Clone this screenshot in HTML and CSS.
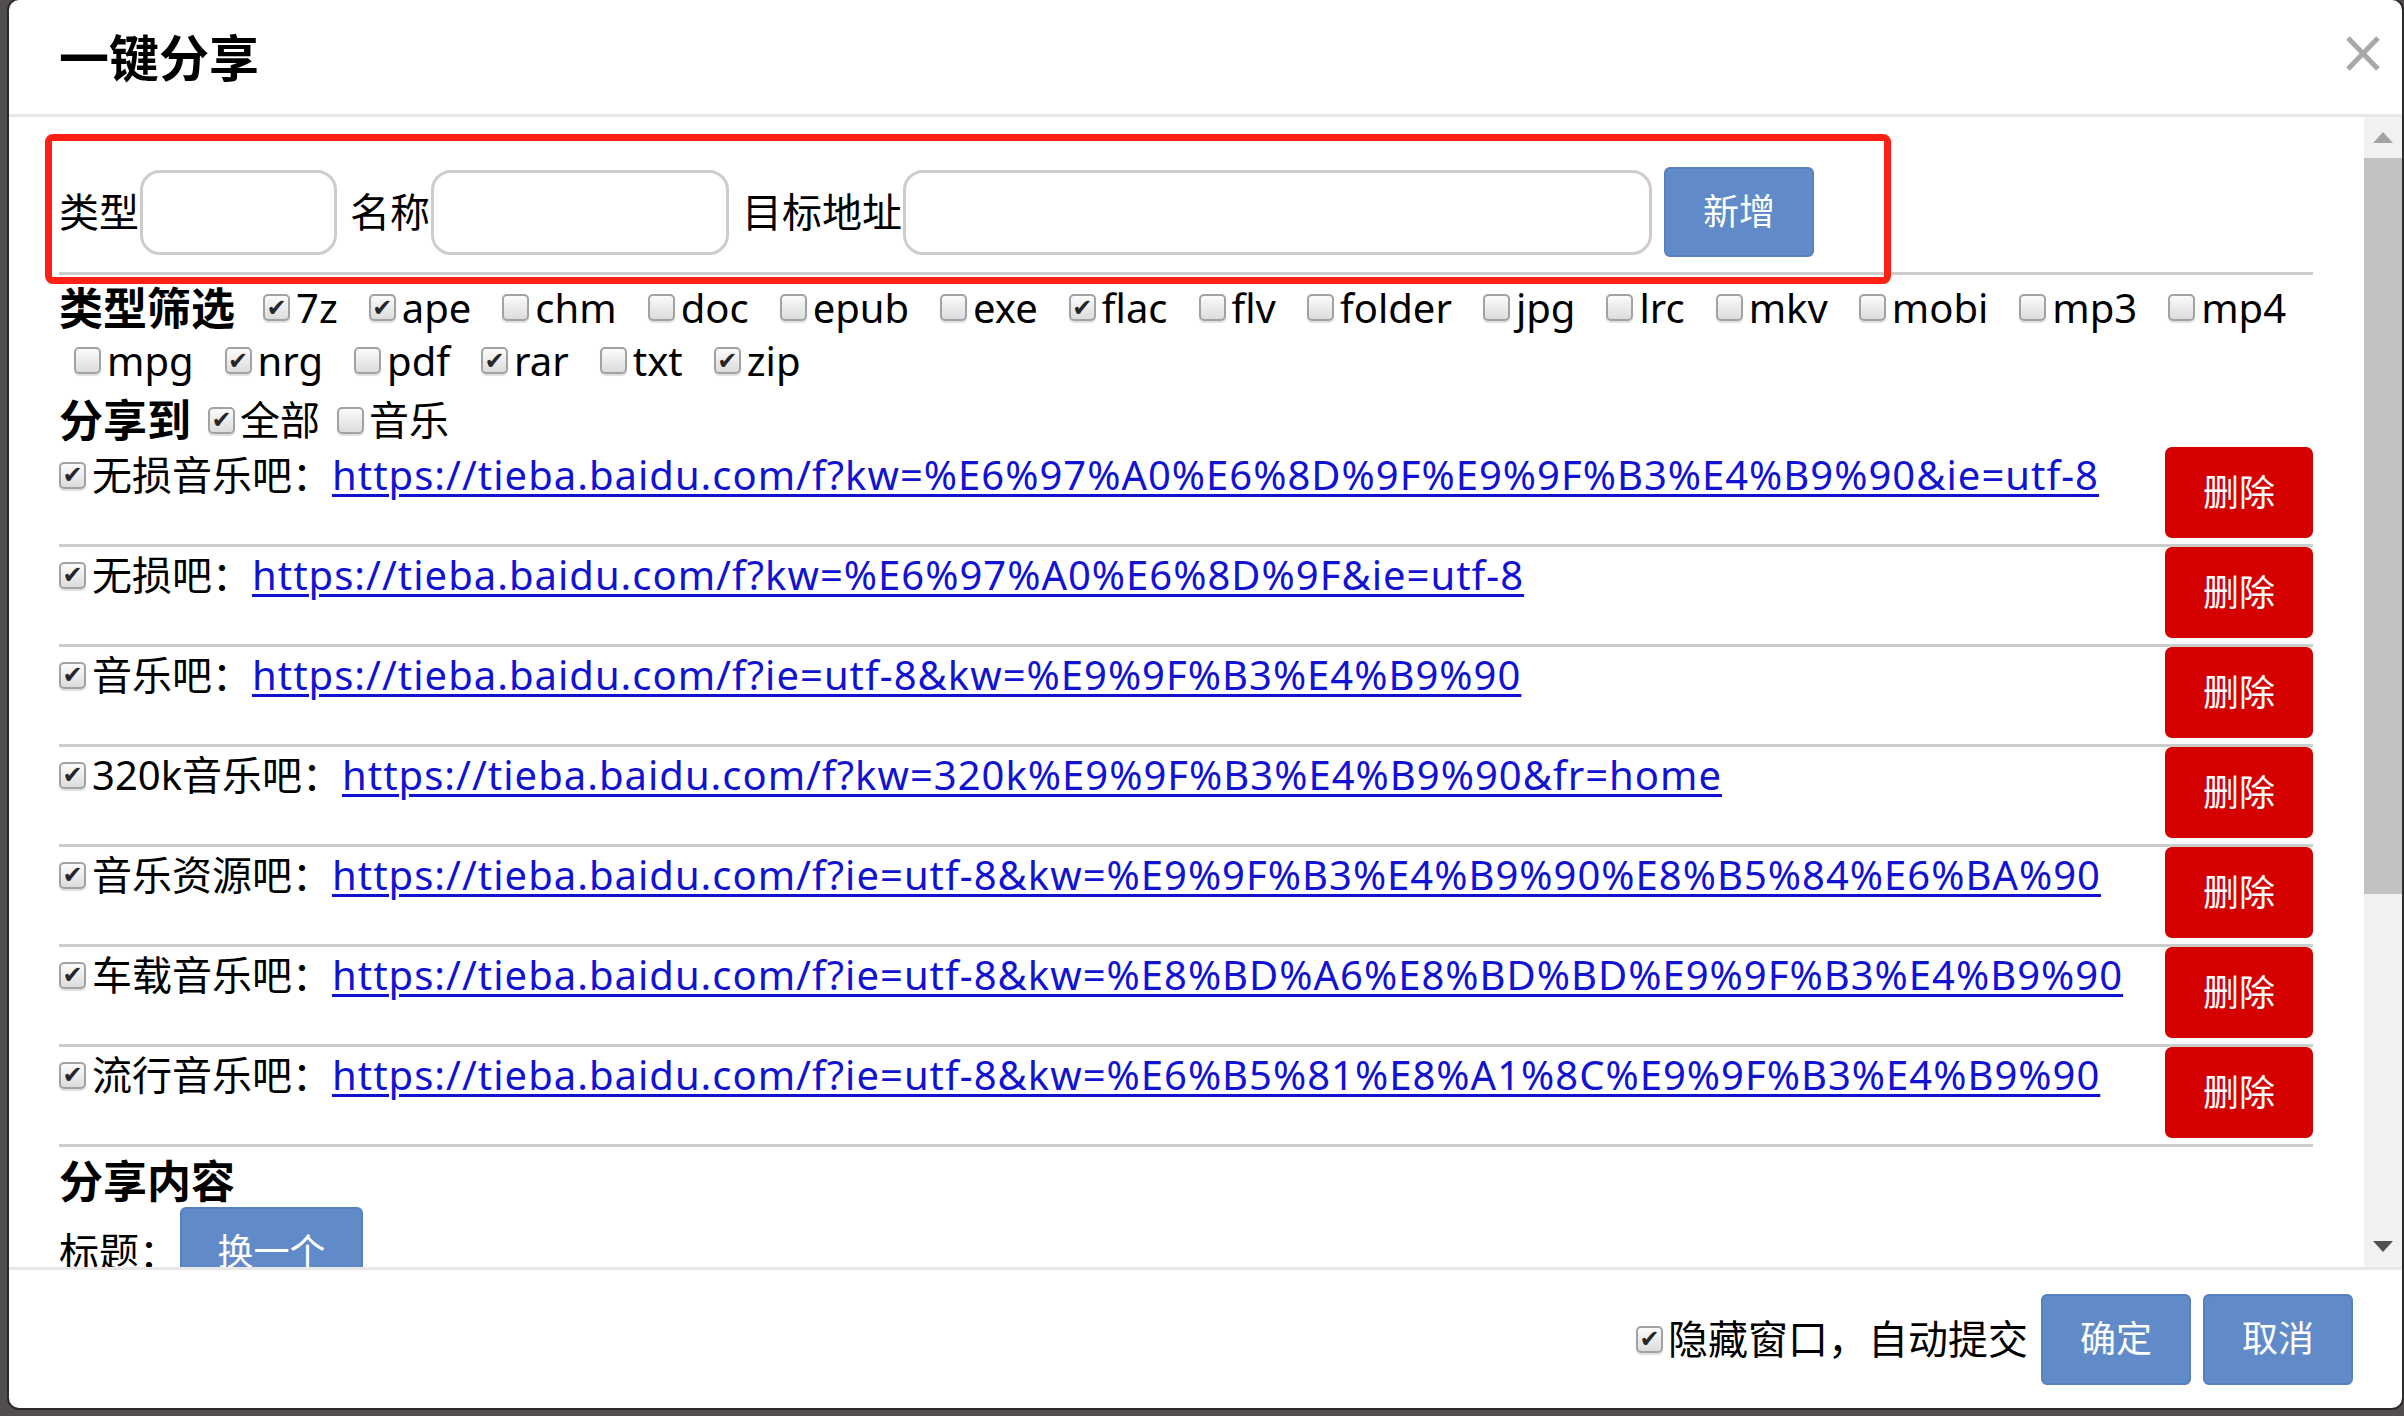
FILE: index.html
```html
<!DOCTYPE html>
<html lang="zh-CN">
<head>
<meta charset="utf-8">
<title>一键分享</title>
<link rel="stylesheet" href="styles.css">
</head>
<body>
<div class="modal">
  <div class="head">
    <h4 class="title">一键分享</h4>
    <span class="close"><svg viewBox="0 0 34 35" width="34" height="35"><path d="M2 2 L32 33 M32 2 L2 33" stroke="#a8a8a8" stroke-width="5" fill="none"/></svg></span>
  </div>
  <div class="main">
    <div class="content">
      <div class="addrow">
        <span class="lbl">类型</span><input class="inp w1" type="text">
        <span class="lbl gap">名称</span><input class="inp w2" type="text">
        <span class="lbl gap">目标地址</span><input class="inp w3" type="text">
        <button class="btn blue add">新增</button>
      </div>
      <div class="hr"></div>
      <div class="fline first">
        <b class="h h-first">类型筛选</b>
        <span class="it"><span class="cb on"></span>7z</span>
        <span class="it"><span class="cb on"></span>ape</span>
        <span class="it"><span class="cb"></span>chm</span>
        <span class="it"><span class="cb"></span>doc</span>
        <span class="it"><span class="cb"></span>epub</span>
        <span class="it"><span class="cb"></span>exe</span>
        <span class="it"><span class="cb on"></span>flac</span>
        <span class="it"><span class="cb"></span>flv</span>
        <span class="it"><span class="cb"></span>folder</span>
        <span class="it"><span class="cb"></span>jpg</span>
        <span class="it"><span class="cb"></span>lrc</span>
        <span class="it"><span class="cb"></span>mkv</span>
        <span class="it"><span class="cb"></span>mobi</span>
        <span class="it"><span class="cb"></span>mp3</span>
        <span class="it"><span class="cb"></span>mp4</span>
      </div>
      <div class="fline">
        <span class="it"><span class="cb"></span>mpg</span>
        <span class="it"><span class="cb on"></span>nrg</span>
        <span class="it"><span class="cb"></span>pdf</span>
        <span class="it"><span class="cb on"></span>rar</span>
        <span class="it"><span class="cb"></span>txt</span>
        <span class="it"><span class="cb on"></span>zip</span>
      </div>
      <div class="sline">
        <b class="h">分享到</b>
        <span class="sit"><span class="cb on"></span>全部</span>
        <span class="sit"><span class="cb"></span>音乐</span>
      </div>
      <div class="row">
        <div class="rl"><span class="cb on"></span><span class="nm">无损音乐吧：</span><a href="#">https://tieba.baidu.com/f?kw=%E6%97%A0%E6%8D%9F%E9%9F%B3%E4%B9%90&amp;ie=utf-8</a></div>
        <button class="btn red">删除</button>
      </div>
      <div class="row">
        <div class="rl"><span class="cb on"></span><span class="nm">无损吧：</span><a href="#">https://tieba.baidu.com/f?kw=%E6%97%A0%E6%8D%9F&amp;ie=utf-8</a></div>
        <button class="btn red">删除</button>
      </div>
      <div class="row">
        <div class="rl"><span class="cb on"></span><span class="nm">音乐吧：</span><a href="#">https://tieba.baidu.com/f?ie=utf-8&amp;kw=%E9%9F%B3%E4%B9%90</a></div>
        <button class="btn red">删除</button>
      </div>
      <div class="row">
        <div class="rl"><span class="cb on"></span><span class="nm">320k音乐吧：</span><a href="#">https://tieba.baidu.com/f?kw=320k%E9%9F%B3%E4%B9%90&amp;fr=home</a></div>
        <button class="btn red">删除</button>
      </div>
      <div class="row">
        <div class="rl"><span class="cb on"></span><span class="nm">音乐资源吧：</span><a href="#">https://tieba.baidu.com/f?ie=utf-8&amp;kw=%E9%9F%B3%E4%B9%90%E8%B5%84%E6%BA%90</a></div>
        <button class="btn red">删除</button>
      </div>
      <div class="row">
        <div class="rl"><span class="cb on"></span><span class="nm">车载音乐吧：</span><a href="#">https://tieba.baidu.com/f?ie=utf-8&amp;kw=%E8%BD%A6%E8%BD%BD%E9%9F%B3%E4%B9%90</a></div>
        <button class="btn red">删除</button>
      </div>
      <div class="row">
        <div class="rl"><span class="cb on"></span><span class="nm">流行音乐吧：</span><a href="#">https://tieba.baidu.com/f?ie=utf-8&amp;kw=%E6%B5%81%E8%A1%8C%E9%9F%B3%E4%B9%90</a></div>
        <button class="btn red">删除</button>
      </div>
      <div class="sec">分享内容</div>
      <div class="tline">
        <span class="lbl">标题：</span>
        <button class="btn blue swap">换一个</button>
      </div>
    </div>
    <div class="sb">
      <div class="arrow up"></div>
      <div class="thumb"></div>
      <div class="track"></div>
      <div class="arrow down"></div>
    </div>
  </div>
  <div class="foot">
    <span class="auto"><span class="cb on"></span>隐藏窗口，自动提交</span>
    <button class="btn blue fb">确定</button>
    <button class="btn blue fb">取消</button>
  </div>
</div>
<div class="mark"></div>
</body>
</html>
```

FILE: styles.css
```css
html, body {
  margin: 0;
  height: 100%;
}
body {
  background: #524e4e;
  overflow: hidden;
  font-family: "Noto Sans", "Noto Sans CJK SC", sans-serif;
  font-size: 40px;
  color: #000;
}
.modal {
  box-sizing: border-box;
  width: 2397px;
  height: 1412px;
  margin: -2px 0 0 7px;
  border: 2px solid #2b2b2b;
  border-radius: 12px;
  background: #fff;
  display: flex;
  flex-direction: column;
  overflow: hidden;
}
.head {
  height: 114px;
  flex: none;
  border-bottom: 3px solid #e8e8e8;
  display: flex;
  align-items: center;
  justify-content: space-between;
  padding: 0 22px 0 50px;
}
.title {
  margin: 2px 0 0;
  font-size: 50px;
  font-weight: 700;
  line-height: 1;
}
.close {
  align-self: flex-start;
  margin-top: 36px;
  width: 34px;
  height: 35px;
}
.close svg { display: block; }
.main {
  flex: 1;
  display: flex;
  min-height: 0;
}
.content {
  flex: 1;
  overflow: hidden;
  padding: 50px 51px 0 50px;
}
.addrow {
  display: flex;
  align-items: center;
  height: 90px;
}
.lbl {
  line-height: 1;
  white-space: nowrap;
}
.lbl.gap { margin-left: 13px; }
.inp {
  box-sizing: border-box;
  height: 85px;
  margin: 0 0 0 1px;
  border: 3px solid #cdcdcd;
  border-radius: 20px;
  background: #fff;
  outline: none;
}
.w1 { width: 197px; }
.w2 { width: 298px; }
.w3 { width: 749px; }
.btn {
  box-sizing: border-box;
  border-radius: 6px;
  color: #fff;
  font-family: "Noto Sans", "Noto Sans CJK SC", sans-serif;
  font-size: 36px;
  line-height: 1;
  padding: 0;
  flex: none;
}
.blue {
  background: #618bc8;
  border: 2px solid #5680bf;
}
.red {
  background: #d50000;
  border: none;
  width: 148px;
  height: 91px;
  border-radius: 7px;
}
.add {
  width: 150px;
  height: 90px;
  margin-left: 12px;
}
.hr {
  border-top: 3px solid #cccccc;
  margin-top: 15px;
}
.fline {
  display: flex;
  align-items: center;
  height: 53px;
  white-space: nowrap;
}
.fline.first { margin-top: 6px; }
.h {
  font-size: 44px;
  font-weight: 700;
  line-height: 1;
}
.h-first { margin-right: 13px; }
.it {
  display: flex;
  align-items: center;
  padding-left: 15px;
  margin-right: 16px;
  line-height: 1;
}
.cb {
  box-sizing: border-box;
  width: 27px;
  height: 27px;
  flex: none;
  border: 2px solid #a2a2a2;
  border-radius: 5px;
  background: linear-gradient(#fbfbfb, #dcdcdc);
  box-shadow: 0 2px 1px rgba(0, 0, 0, 0.13);
  margin-right: 6px;
  display: flex;
  align-items: center;
  justify-content: center;
  overflow: hidden;
}
.cb.on::after {
  content: "\2714";
  font-family: "DejaVu Sans", sans-serif;
  font-size: 24px;
  font-weight: 700;
  line-height: 1;
  color: #262626;
}
.sline {
  box-sizing: border-box;
  display: flex;
  align-items: center;
  height: 60px;
  padding-top: 6px;
  white-space: nowrap;
}
.sit {
  display: flex;
  align-items: center;
  margin-left: 17px;
  line-height: 1;
}
.sit .cb { margin-right: 5px; }
.row {
  display: flex;
  justify-content: space-between;
  align-items: flex-start;
  padding-bottom: 6px;
  border-bottom: 3px solid #cccccc;
}
.rl {
  display: flex;
  align-items: center;
  height: 56px;
  white-space: nowrap;
  line-height: 1;
}
.rl a {
  color: #1212d2;
  letter-spacing: 1px;
  text-decoration: underline;
  text-decoration-thickness: 3px;
  text-underline-offset: 4px;
}
.sec {
  font-size: 44px;
  font-weight: 700;
  line-height: 52px;
  padding-top: 8px;
}
.tline {
  display: flex;
  align-items: center;
}
.swap {
  width: 183px;
  height: 90px;
  margin-left: 1px;
}
.sb {
  width: 38px;
  flex: none;
  background: #f1f1f1;
  display: flex;
  flex-direction: column;
}
.arrow {
  height: 41px;
  flex: none;
  display: flex;
  align-items: center;
  justify-content: center;
}
.up::before {
  content: "";
  border-left: 10.5px solid transparent;
  border-right: 10.5px solid transparent;
  border-bottom: 11px solid #a3a3a3;
}
.down::before {
  content: "";
  border-left: 10.5px solid transparent;
  border-right: 10.5px solid transparent;
  border-top: 11px solid #505050;
}
.thumb {
  height: 736px;
  flex: none;
  background: #c1c1c1;
}
.track { flex: 1; }
.foot {
  height: 138px;
  flex: none;
  border-top: 3px solid #e8e8e8;
  display: flex;
  align-items: center;
  justify-content: flex-end;
  padding-right: 49px;
}
.auto {
  display: flex;
  align-items: center;
  line-height: 1;
  margin-right: 13px;
}
.auto .cb { margin-right: 5px; }
.fb {
  width: 150px;
  height: 91px;
}
.fb + .fb { margin-left: 12px; }
.mark {
  position: absolute;
  left: 45px;
  top: 134px;
  width: 1846px;
  height: 150px;
  box-sizing: border-box;
  border: 7px solid #ff2016;
  border-radius: 8px;
  pointer-events: none;
}
```
